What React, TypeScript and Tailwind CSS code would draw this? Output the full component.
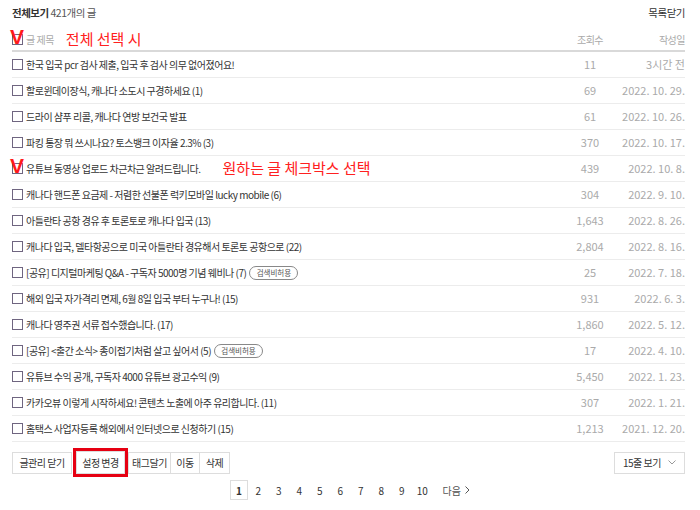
const posts = [
  { title: '한국 입국 pcr 검사 제출, 입국 후 검사 의무 없어졌어요!', views: '11', date: '3시간 전' },
  { title: '할로윈데이장식, 캐나다 소도시 구경하세요 (1)', views: '69', date: '2022. 10. 29.' },
  { title: '드라이 샴푸 리콜, 캐나다 연방 보건국 발표', views: '61', date: '2022. 10. 26.' },
  { title: '파킹 통장 뭐 쓰시나요? 토스뱅크 이자율 2.3% (3)', views: '370', date: '2022. 10. 17.' },
  { title: '유튜브 동영상 업로드 차근차근 알려드립니다.', views: '439', date: '2022. 10. 8.', note: '원하는 글 체크박스 선택' },
  { title: '캐나다 핸드폰 요금제 - 저렴한 선불폰 럭키모바일 lucky mobile (6)', views: '304', date: '2022. 9. 10.' },
  { title: '아틀란타 공항 경유 후 토론토로 캐나다 입국 (13)', views: '1,643', date: '2022. 8. 26.' },
  { title: '캐나다 입국, 델타항공으로 미국 아틀란타 경유해서 토론토 공항으로 (22)', views: '2,804', date: '2022. 8. 16.' },
  { title: '[공유] 디지털마케팅 Q&A - 구독자 5000명 기념 웨비나 (7)', views: '25', date: '2022. 7. 18.', badge: true },
  { title: '해외 입국 자가격리 면제, 6월 8일 입국 부터 누구나! (15)', views: '931', date: '2022. 6. 3.' },
  { title: '캐나다 영주권 서류 접수했습니다. (17)', views: '1,860', date: '2022. 5. 12.' },
  { title: '[공유] <출간 소식> 종이접기처럼 살고 싶어서 (5)', views: '17', date: '2022. 4. 10.', badge: true },
  { title: '유튜브 수익 공개, 구독자 4000 유튜브 광고수익 (9)', views: '5,450', date: '2022. 1. 23.' },
  { title: '카카오뷰 이렇게 시작하세요! 콘텐츠 노출에 아주 유리합니다. (11)', views: '307', date: '2022. 1. 21.' },
  { title: '홈택스 사업자등록 해외에서 인터넷으로 신청하기 (15)', views: '1,213', date: '2021. 12. 20.' },
]

function Check({ marked }: { marked?: boolean }) {
  return (
    <span className="relative w-[11px] h-[11px] border border-[#6f6580] bg-white shrink-0">
      {marked && (
        <span className="absolute left-[-3px] top-[-9px] text-[21px] leading-none font-bold text-[#ff1a1a] tracking-normal font-['Liberation_Sans',sans-serif]">
          V
        </span>
      )}
    </span>
  )
}

export default function App() {
  return (
    <div className="w-[700px] h-[510px] bg-white px-3 pt-[5px] font-['Noto_Sans_CJK_KR','Noto_Sans',sans-serif] text-[10px] tracking-[-0.5px] text-[#333] overflow-hidden">
      <div className="flex justify-between items-center h-4 pr-[3px] text-[10.5px]">
        <div>
          <span className="font-bold">전체보기</span> <span className="text-[#555]">421개의 글</span>
        </div>
        <span>목록닫기</span>
      </div>

      <div className="mt-[7px] pr-[3px]">
        <div className="flex items-center h-[24px] border-b-2 border-[#d9d9d9] text-[#aaa]">
          <Check marked />
          <span className="ml-[3px]">글 제목</span>
          <span className="ml-[12px] text-[15px] tracking-normal text-[#ff2020]">전체 선택 시</span>
          <span className="flex-1" />
          <span className="w-[50px] text-center">조회수</span>
          <span className="w-[70px] text-right">작성일</span>
        </div>

        {posts.map((p, i) => (
          <div key={i} className="flex items-center h-[26px] border-b border-[#ececec]">
            <Check marked={!!p.note} />
            <span className="ml-[3px] whitespace-nowrap">{p.title}</span>
            {p.badge && (
              <span className="ml-[3px] w-[49px] h-[14px] flex items-center justify-center rounded-full border border-[#888] text-[7.5px] tracking-normal text-[#555]">
                검색비허용
              </span>
            )}
            {p.note && <span className="ml-[22px] text-[15px] tracking-normal text-[#ff2020]">{p.note}</span>}
            <span className="flex-1" />
            <span className="w-[50px] text-center text-[11px] tracking-normal text-[#aaa]">{p.views}</span>
            <span className="w-[70px] text-right text-[11px] tracking-normal text-[#aaa]">{p.date}</span>
          </div>
        ))}
      </div>

      <div className="flex items-center justify-between mt-[6px] pr-[3px]">
        <div className="flex items-center">
          <button className="h-[22px] w-[60px] border border-[#ddd]">글관리 닫기</button>
          <div className="ml-px border-[3px] border-[#e60012]">
            <button className="h-[23px] w-[49px] border border-[#ddd] block">설정 변경</button>
          </div>
          <button className="h-[22px] w-[43px] border border-[#ddd]">태그달기</button>
          <button className="h-[22px] w-[29px] border border-[#ddd] border-l-0">이동</button>
          <button className="h-[22px] w-[30px] border border-[#ddd] border-l-0">삭제</button>
        </div>
        <button className="h-[22px] w-[71px] border border-[#ddd] flex items-center justify-center gap-[7px]">
          15줄 보기
          <svg width="8" height="5" viewBox="0 0 8 5" fill="none" stroke="#999" strokeWidth="1">
            <path d="M0.5 0.5 L4 4 L7.5 0.5" />
          </svg>
        </button>
      </div>

      <div className="flex justify-center items-center mt-[3px] text-[10px] tracking-normal">
        <span className="w-[18px] h-[20px] flex items-center justify-center border border-[#ddd] font-bold">1</span>
        {['2', '3', '4', '5', '6', '7', '8', '9', '10'].map((n) => (
          <span key={n} className="w-[20.5px] text-center">{n}</span>
        ))}
        <span className="ml-[10px] flex items-center gap-[4px] text-[#555]">
          다음
          <svg width="5" height="8" viewBox="0 0 5 8" fill="none" stroke="#555" strokeWidth="1">
            <path d="M0.5 0.5 L4 4 L0.5 7.5" />
          </svg>
        </span>
      </div>
    </div>
  )
}
